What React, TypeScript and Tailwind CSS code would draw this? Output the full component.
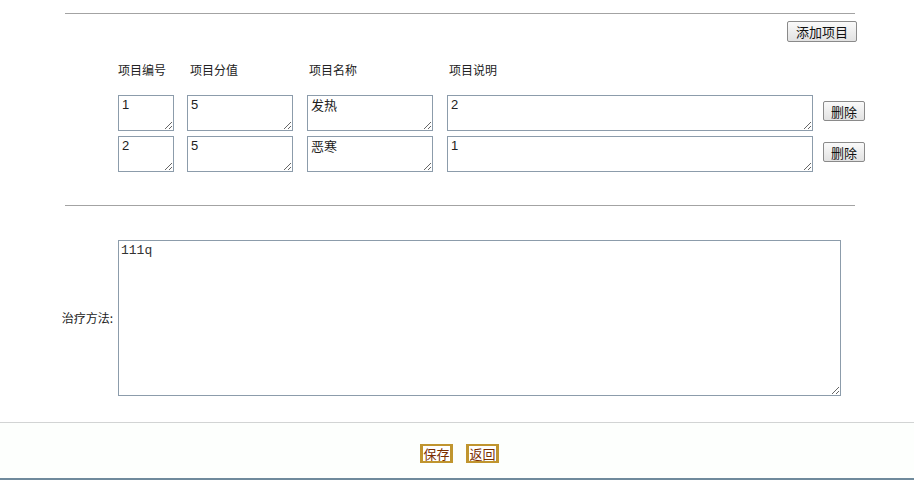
const font = "font-['SimSun','Noto_Sans_CJK_SC',sans-serif]"

const items = [
  { no: '1', score: '5', name: '发热', desc: '2' },
  { no: '2', score: '5', name: '恶寒', desc: '1' },
]

const boxCls =
  "block h-[36px] resize-y border border-[#8c9cab] bg-white px-[3px] pt-[1px] text-[13px] leading-[15px] text-[#222] font-['Liberation_Sans','Noto_Sans_CJK_SC',sans-serif] outline-none"

function GrayButton({ label, className }: { label: string; className?: string }) {
  return (
    <button
      type="button"
      className={`flex items-center justify-center rounded-[2px] border border-[#8a8a8a] bg-gradient-to-b from-[#fafafa] to-[#e2e2e2] text-[13px] leading-none text-[#111] ${className ?? ''}`}
    >
      {label}
    </button>
  )
}

function GoldButton({ label }: { label: string }) {
  return (
    <button
      type="button"
      className="flex h-[19px] w-[33px] items-center justify-center border-y-2 border-x-[3px] border-[#c0952f] bg-white text-[13px] leading-none text-[#7a2e00]"
    >
      {label}
    </button>
  )
}

export default function App() {
  return (
    <div className={`min-h-[491px] w-full bg-white text-[12px] text-[#222] ${font}`}>
      <div className="pt-[13px]">
        <div className="ml-[65px] h-px w-[790px] bg-[#a3a3a3]" />
      </div>

      <div className="mt-[7px] flex w-[857px] justify-end">
        <GrayButton label="添加项目" className="h-[21px] w-[70px]" />
      </div>

      <div className="mt-[21px] flex pl-[118px] leading-[14px]">
        <div className="w-[69px]">项目编号</div>
        <div className="w-[120px] pl-[3px]">项目分值</div>
        <div className="w-[140px] pl-[2px]">项目名称</div>
        <div className="pl-[2px]">项目说明</div>
      </div>

      <div className="mt-[18px] flex flex-col gap-[5px] pl-[118px]">
        {items.map((it) => (
          <div key={it.no} className="flex items-start">
            <textarea className={`${boxCls} w-[56px]`} defaultValue={it.no} />
            <textarea className={`${boxCls} ml-[13px] w-[106px]`} defaultValue={it.score} />
            <textarea className={`${boxCls} ml-[14px] w-[126px] ${font}`} defaultValue={it.name} />
            <textarea className={`${boxCls} ml-[14px] w-[366px]`} defaultValue={it.desc} />
            <GrayButton label="删除" className="ml-[10px] mt-[6px] h-[20px] w-[42px]" />
          </div>
        ))}
      </div>

      <div className="mt-[33px] ml-[65px] h-px w-[790px] bg-[#a3a3a3]" />

      <div className="mt-[34px] flex items-center">
        <div className="w-[118px] pr-[5px] text-right">治疗方法:</div>
        <textarea
          className="block h-[156px] w-[723px] resize border border-[#8c9cab] bg-white px-[2px] pt-[2px] font-['Liberation_Mono',monospace] text-[13px] leading-[16px] text-[#333] outline-none"
          defaultValue="111q"
        />
      </div>

      <div className="mt-[26px] h-px w-full bg-[#d2d4d4]" />
      <div className="flex h-[55px] items-center justify-center gap-[13px] bg-[#fdfffd] pl-[5px] pt-[6px]">
        <GoldButton label="保存" />
        <GoldButton label="返回" />
      </div>
      <div className="h-[2px] w-full bg-[#6f8a9c]" />
    </div>
  )
}
